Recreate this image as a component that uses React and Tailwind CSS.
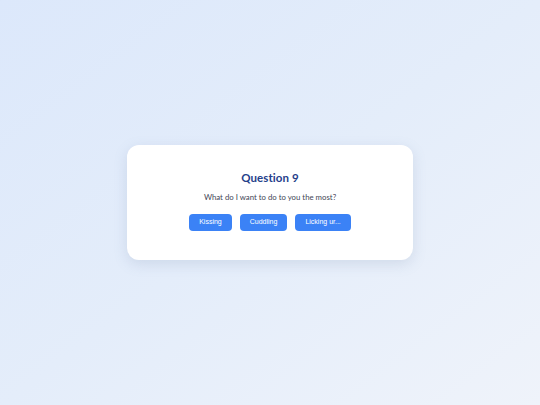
import React from 'react';

const answers = ['Kissing', 'Cuddling', 'Licking ur...'];

const App = () => {
  return (
    <div className="w-[540px] h-[405px] flex items-center justify-center bg-gradient-to-br from-[#dce8fb] via-[#e4edfa] to-[#eff3fa]">
      <div
        className="w-[286px] bg-white rounded-xl shadow-[0_4px_14px_rgba(100,120,160,0.18)] pt-[23px] pb-[29px] flex flex-col items-center"
        style={{ fontFamily: 'Lato, "Noto Sans", sans-serif' }}
      >
        <h2 className="text-[11.5px] leading-[20px] font-bold text-[#25408a] tracking-[0.1px]">Question 9</h2>
        <p className="mt-[2px] text-[7.8px] leading-[14px] text-[#3f4656]">What do I want to do to you the most?</p>
        <div className="mt-[10px] flex gap-2">
          {answers.map((a) => (
            <button
              key={a}
              className="h-[17px] px-[10px] rounded-[4px] bg-[#3b82f6] text-white text-[7px]"
              style={{ fontFamily: '"Liberation Sans", Arial, sans-serif' }}
            >
              {a}
            </button>
          ))}
        </div>
      </div>
    </div>
  );
};

export default App;
